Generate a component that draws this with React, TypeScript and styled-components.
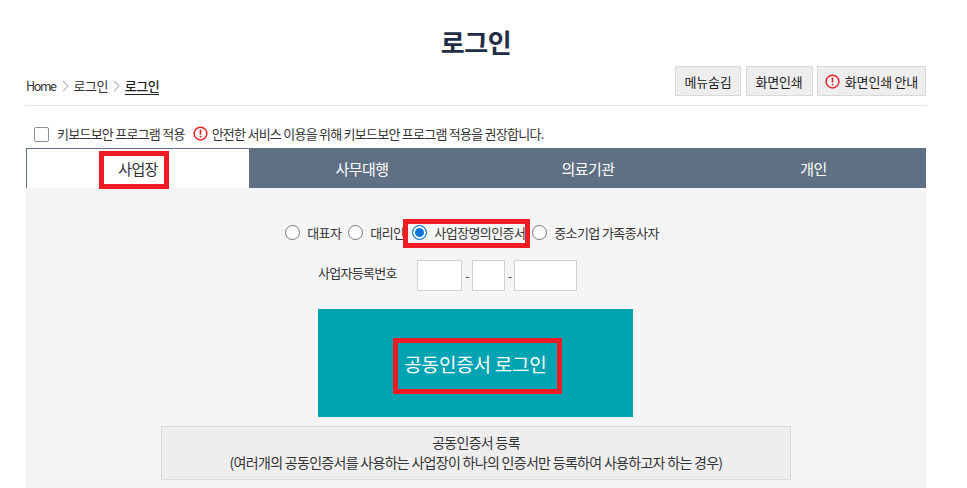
import { createGlobalStyle } from "styled-components"
import styled from "styled-components"

const GlobalStyle = createGlobalStyle`
  html, body {
    margin: 0;
    padding: 0;
    background: #fff;
    overflow: hidden;
  }
  body {
    font-family: "Noto Sans CJK KR", "Noto Sans", sans-serif;
    color: #222;
  }
`

const Page = styled.div`
  width: 900px;
  height: 488px;
  margin-left: 26px;
  overflow: hidden;
`

const Title = styled.h1`
  margin: 0;
  padding-top: 23px;
  height: 43px;
  font-size: 26px;
  line-height: 38px;
  font-weight: 700;
  color: #1f2d45;
  text-align: center;
  letter-spacing: -0.5px;
`

const TopBar = styled.div`
  display: flex;
  justify-content: space-between;
  align-items: center;
  height: 39px;
  border-bottom: 1px solid #e4e4e4;
`

const Crumbs = styled.div`
  display: flex;
  align-items: center;
  gap: 5px;
  font-size: 13px;
  letter-spacing: -0.55px;
  color: #333;
`

const CrumbHome = styled.span`
  font-size: 12.5px;
  letter-spacing: -1.4px;
  margin-right: 1px;
`

const CrumbCurrent = styled.span`
  font-weight: 500;
  color: #222;
  text-decoration: underline;
  text-underline-offset: 3px;
`

const Tools = styled.div`
  display: flex;
  gap: 4.5px;
  margin-top: -9px;
`

const ToolButton = styled.button<{ $w: number }>`
  display: flex;
  align-items: center;
  justify-content: center;
  gap: 5px;
  box-sizing: border-box;
  height: 30px;
  width: ${(p) => p.$w}px;
  padding: 0;
  border: 1px solid #d9d9d9;
  background: #eeeeee;
  font-family: inherit;
  font-size: 13px;
  letter-spacing: -0.2px;
  color: #222;
`

const KeyboardRow = styled.div`
  display: flex;
  align-items: center;
  height: 42px;
  padding-left: 8px;
  box-sizing: border-box;
  padding-top: 12px;
  font-size: 13px;
  letter-spacing: -0.75px;
  color: #333;
`

const CheckBox = styled.span`
  width: 13px;
  height: 13px;
  margin-top: 2px;
  border: 1px solid #8f8f8f;
  border-radius: 2px;
  background: #fff;
  margin-right: 8px;
`

const Notice = styled.span`
  display: flex;
  align-items: center;
  gap: 4px;
  margin-left: 8px;
`

const Tabs = styled.div`
  display: grid;
  grid-template-columns: 223px 226px 226px 225px;
  height: 40px;
  background: #5f7084;
`

const Tab = styled.div<{ $active?: boolean }>`
  position: relative;
  display: flex;
  align-items: center;
  justify-content: center;
  box-sizing: border-box;
  font-size: 15px;
  letter-spacing: -0.6px;
  color: ${(p) => (p.$active ? "#333" : "#fff")};
  background: ${(p) => (p.$active ? "#fff" : "transparent")};
  ${(p) => (p.$active ? "border: 1px solid #5f7084; border-width: 1px 0 0 1px;" : "")}
`

const Panel = styled.div`
  display: flex;
  flex-direction: column;
  align-items: center;
  height: 300px;
  padding-top: 30px;
  box-sizing: border-box;
  background: #f5f5f5;
`

const RadioRow = styled.div`
  display: flex;
  align-items: center;
  height: 29px;
  padding-right: 8px;
  font-size: 13px;
  letter-spacing: -0.6px;
  color: #333;
`

const RadioItem = styled.label<{ $gap: number }>`
  position: relative;
  display: flex;
  align-items: center;
  gap: 7px;
  margin-right: ${(p) => p.$gap}px;
`

const RadioDot = styled.span<{ $on?: boolean }>`
  box-sizing: border-box;
  width: 15px;
  height: 15px;
  border-radius: 50%;
  background: ${(p) => (p.$on ? "#0a75d8" : "#fff")};
  border: 1px solid ${(p) => (p.$on ? "#0a75d8" : "#777")};
  box-shadow: ${(p) => (p.$on ? "inset 0 0 0 2px #fff" : "none")};
`

const BizRow = styled.div`
  display: flex;
  align-items: center;
  height: 30px;
  margin-top: 13px;
  margin-right: 57px;
  font-size: 13px;
  letter-spacing: -0.7px;
  color: #333;
`

const BizLabel = styled.span`
  width: 99px;
  margin-top: -5px;
`

const BizInput = styled.span<{ $w: number }>`
  box-sizing: border-box;
  width: ${(p) => p.$w}px;
  height: 31px;
  border: 1px solid #d2d2d2;
  background: #fff;
`

const Dash = styled.span<{ $w: number }>`
  width: ${(p) => p.$w}px;
  text-align: center;
  font-size: 12px;
`

const LoginButton = styled.button`
  position: relative;
  width: 315px;
  height: 108px;
  margin-top: 19px;
  margin-right: 1px;
  border: none;
  padding: 0;
  background: #00a3b2;
  color: #fff;
  font-family: inherit;
  font-size: 19px;
  letter-spacing: -0.2px;
`

const RegisterBox = styled.div`
  box-sizing: border-box;
  width: 630px;
  height: 54px;
  margin-top: 9px;
  padding-top: 5px;
  border: 1px solid #d9d9d9;
  background: #eeeeee;
  text-align: center;
  font-size: 14px;
  line-height: 20px;
  letter-spacing: -0.7px;
  color: #333;
`

// red annotation boxes drawn over the screenshot
const Mark = styled.span<{ $l: number; $t: number; $w: number; $h: number }>`
  position: absolute;
  left: ${(p) => p.$l}px;
  top: ${(p) => p.$t}px;
  width: ${(p) => p.$w}px;
  height: ${(p) => p.$h}px;
  box-sizing: border-box;
  border: 5px solid #ed1c24;
  pointer-events: none;
`

const Alert = ({ size = 15 }: { size?: number }) => (
  <svg width={size} height={size} viewBox="0 0 16 16">
    <circle cx="8" cy="8" r="6.8" fill="#fff" stroke="#e8202a" strokeWidth="1.6" />
    <rect x="7.1" y="3.8" width="1.8" height="5.4" fill="#e8202a" />
    <rect x="7.1" y="10.4" width="1.8" height="1.8" fill="#e8202a" />
  </svg>
)

const Chevron = () => (
  <svg width="7" height="12" viewBox="0 0 7 12">
    <path d="M1 1l5 5-5 5" fill="none" stroke="#bbb" strokeWidth="1.2" />
  </svg>
)

export default function App() {
  return (
    <Page>
      <GlobalStyle />
      <Title>로그인</Title>
      <TopBar>
        <Crumbs>
          <CrumbHome>Home</CrumbHome>
          <Chevron />
          <span>로그인</span>
          <Chevron />
          <CrumbCurrent>로그인</CrumbCurrent>
        </Crumbs>
        <Tools>
          <ToolButton $w={66}>메뉴숨김</ToolButton>
          <ToolButton $w={67}>화면인쇄</ToolButton>
          <ToolButton $w={109}>
            <Alert />
            화면인쇄 안내
          </ToolButton>
        </Tools>
      </TopBar>
      <KeyboardRow>
        <CheckBox />
        <span>키보드보안 프로그램 적용</span>
        <Notice>
          <Alert />
          안전한 서비스 이용을 위해 키보드보안 프로그램 적용을 권장합니다.
        </Notice>
      </KeyboardRow>
      <Tabs>
        <Tab $active>
          사업장
          <Mark $l={72} $t={2} $w={70} $h={38} />
        </Tab>
        <Tab>사무대행</Tab>
        <Tab>의료기관</Tab>
        <Tab>개인</Tab>
      </Tabs>
      <Panel>
        <RadioRow>
          <RadioItem $gap={7}>
            <RadioDot />
            대표자
          </RadioItem>
          <RadioItem $gap={8}>
            <RadioDot />
            대리인
          </RadioItem>
          <RadioItem $gap={7}>
            <RadioDot $on />
            사업장명의인증서
            <Mark $l={-9} $t={-4} $w={127} $h={29} />
          </RadioItem>
          <RadioItem $gap={0}>
            <RadioDot />
            중소기업 가족종사자
          </RadioItem>
        </RadioRow>
        <BizRow>
          <BizLabel>사업자등록번호</BizLabel>
          <BizInput $w={45} />
          <Dash $w={10}>-</Dash>
          <BizInput $w={33} />
          <Dash $w={9}>-</Dash>
          <BizInput $w={63} />
        </BizRow>
        <LoginButton>
          공동인증서 로그인
          <Mark $l={75} $t={29} $w={169} $h={56} />
        </LoginButton>
        <RegisterBox>
          공동인증서 등록
          <br />
          (여러개의 공동인증서를 사용하는 사업장이 하나의 인증서만 등록하여 사용하고자 하는 경우)
        </RegisterBox>
      </Panel>
    </Page>
  )
}
